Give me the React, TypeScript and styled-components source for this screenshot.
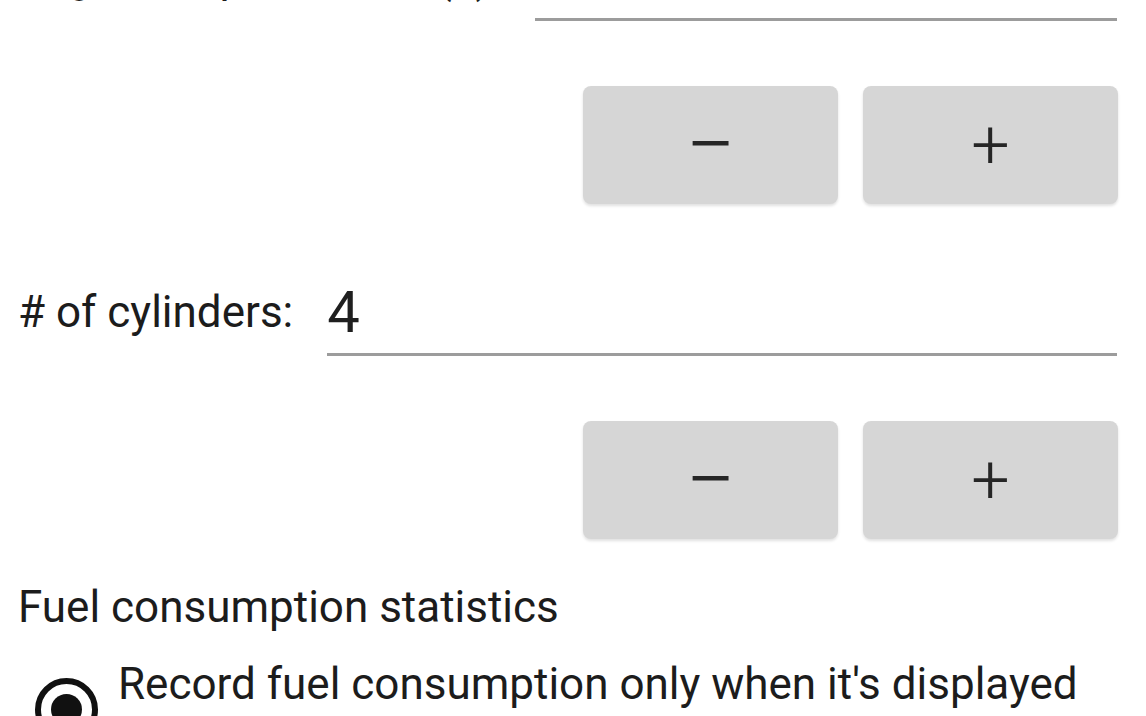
import React from 'react';
import styled, { createGlobalStyle } from 'styled-components';

const GlobalStyle = createGlobalStyle`
  html, body {
    margin: 0;
    padding: 0;
    background: #ffffff;
    overflow: hidden;
  }
  body {
    font-family: Roboto, "Noto Sans", "Liberation Sans", sans-serif;
    color: #212121;
  }
`;

const Screen = styled.div`
  width: 1146px;
  height: 716px;
  overflow: hidden;
  background: #ffffff;
`;

// content is scrolled: the first field's label sits above the top edge
const ScrollContent = styled.div`
  display: flex;
  flex-direction: column;
  margin-top: -58px;
  padding: 0 28px 0 18px;
`;

const FieldRow = styled.div<{ $gapBefore?: number }>`
  display: flex;
  align-items: flex-end;
  margin-top: ${p => p.$gapBefore ?? 0}px;
`;

const Label = styled.span`
  font-size: 44px;
  line-height: 52px;
  margin-bottom: 18px;
  color: #1c1c1c;
  white-space: nowrap;
`;

const ValueField = styled.div`
  flex: 1;
  margin-left: 34px;
  margin-right: 1px;
  font-size: 58px;
  line-height: 70px;
  height: 70px;
  padding-bottom: 6px;
  color: #1f1f1f;
  border-bottom: 3px solid #9c9c9c;
`;

const ButtonRow = styled.div`
  display: flex;
  justify-content: flex-end;
  gap: 25px;
  margin-top: 65px;
`;

const StepButton = styled.button<{ $glyph: number }>`
  display: flex;
  align-items: center;
  justify-content: center;
  width: 255px;
  height: 118px;
  padding: 0;
  border: none;
  border-radius: 8px;
  background: #d6d6d6;
  box-shadow: 0 2px 3px rgba(0, 0, 0, 0.12);
  font-family: Roboto, "Noto Sans", sans-serif;
  font-size: ${p => p.$glyph}px;
  font-weight: 300;
  line-height: 1;
  color: #262626;
  cursor: pointer;
`;

const SectionTitle = styled.div`
  font-size: 44px;
  line-height: 52px;
  margin-top: 42px;
  color: #1c1c1c;
`;

const RadioOption = styled.div`
  display: flex;
  align-items: flex-start;
  margin-top: 25px;
`;

const RadioRing = styled.span`
  box-sizing: border-box;
  display: flex;
  align-items: center;
  justify-content: center;
  flex: none;
  width: 63px;
  height: 63px;
  margin: 20px 0 0 17px;
  border: 6px solid #111111;
  border-radius: 50%;
`;

const RadioDot = styled.span`
  width: 31px;
  height: 31px;
  border-radius: 50%;
  background: #111111;
`;

const RadioText = styled.span`
  margin-left: 20px;
  font-size: 44px;
  line-height: 52px;
  color: #1c1c1c;
  white-space: nowrap;
`;

interface StepperFieldProps {
  label: string;
  value: string;
  gapBefore?: number;
}

function StepperField({ label, value, gapBefore }: StepperFieldProps) {
  return (
    <>
      <FieldRow $gapBefore={gapBefore}>
        <Label>{label}</Label>
        <ValueField>{value}</ValueField>
      </FieldRow>
      <ButtonRow>
        <StepButton $glyph={88}>−</StepButton>
        <StepButton $glyph={68}>+</StepButton>
      </ButtonRow>
    </>
  );
}

export default function App() {
  return (
    <Screen>
      <GlobalStyle />
      <ScrollContent>
        <StepperField label="Engine displacement (L):" value="" />
        <StepperField label="# of cylinders:" value="4" gapBefore={73} />
        <SectionTitle>Fuel consumption statistics</SectionTitle>
        <RadioOption>
          <RadioRing>
            <RadioDot />
          </RadioRing>
          <RadioText>Record fuel consumption only when it's displayed</RadioText>
        </RadioOption>
      </ScrollContent>
    </Screen>
  );
}
